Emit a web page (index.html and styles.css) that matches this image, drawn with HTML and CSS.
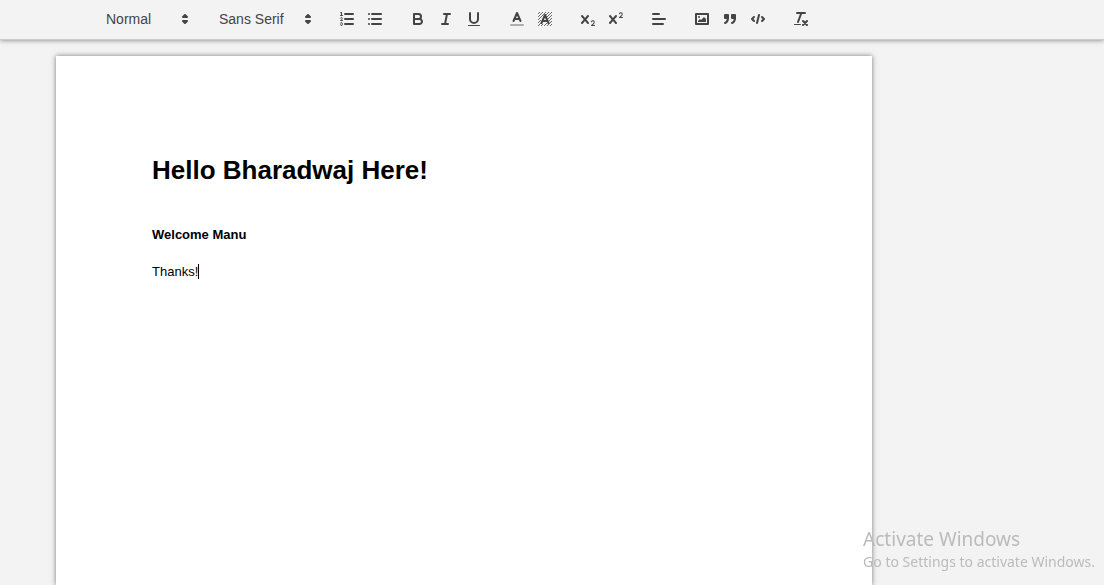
FILE: index.html
```html
<!DOCTYPE html>
<html lang="en">
<head>
<meta charset="utf-8">
<meta name="viewport" content="width=device-width, initial-scale=1">
<title>Document editor</title>
<link rel="stylesheet" href="styles.css">
</head>
<body>
<div class="toolbar" role="toolbar" aria-label="Formatting">
  <div class="picker picker-header">
    <select class="picker-select" aria-label="Heading level">
      <option>Normal</option>
      <option>Heading 1</option>
      <option>Heading 2</option>
    </select>
    <svg class="icon picker-arrows" viewBox="0 0 18 18" aria-hidden="true"><polygon class="stroke" points="7 11 9 13 11 11 7 11"/><polygon class="stroke" points="7 7 9 5 11 7 7 7"/></svg>
  </div>
  <div class="picker picker-font">
    <select class="picker-select" aria-label="Font">
      <option>Sans Serif</option>
      <option>Serif</option>
      <option>Monospace</option>
    </select>
    <svg class="icon picker-arrows" viewBox="0 0 18 18" aria-hidden="true"><polygon class="stroke" points="7 11 9 13 11 11 7 11"/><polygon class="stroke" points="7 7 9 5 11 7 7 7"/></svg>
  </div>
  <div class="group">
    <button class="tool" type="button" aria-label="Numbered list"><svg class="icon" viewBox="0 0 18 18"><path class="stroke" d="M7 4H15M7 9H15M7 14H15"/><path class="stroke thin" d="M2.5 5.5H4.5"/><path class="fill" d="M3.5,6A0.5,0.5,0,0,1,3,5.5V3.085l-0.276.138A0.5,0.5,0,0,1,2.053,3c-0.124-.247-0.023-0.324.224-0.447l1-.5A0.5,0.5,0,0,1,4,2.5v3A0.5,0.5,0,0,1,3.5,6Z"/><path class="stroke thin" d="M4.5,10.5h-2c0-.234,1.85-1.076,1.85-2.234A0.959,0.959,0,0,0,2.5,8.156"/><path class="stroke thin" d="M2.5,14.846a0.959,0.959,0,0,0,1.85-.109A0.7,0.7,0,0,0,3.75,14a0.688,0.688,0,0,0,.6-0.736,0.959,0.959,0,0,0-1.85-.109"/></svg></button>
    <button class="tool" type="button" aria-label="Bulleted list"><svg class="icon" viewBox="0 0 18 18"><path class="stroke" d="M6 4H15M6 9H15M6 14H15M3 4H3M3 9H3M3 14H3"/></svg></button>
  </div>
  <div class="group">
    <button class="tool" type="button" aria-label="Bold"><svg class="icon" viewBox="0 0 18 18"><path class="stroke" d="M5,4H9.5A2.5,2.5,0,0,1,12,6.5v0A2.5,2.5,0,0,1,9.5,9H5V4Z"/><path class="stroke" d="M5,9h5.5A2.5,2.5,0,0,1,13,11.5v0A2.5,2.5,0,0,1,10.5,14H5V9Z"/></svg></button>
    <button class="tool" type="button" aria-label="Italic"><svg class="icon" viewBox="0 0 18 18"><path class="stroke" d="M7 4H13M5 14H11M8 14L10 4"/></svg></button>
    <button class="tool" type="button" aria-label="Underline"><svg class="icon" viewBox="0 0 18 18"><path class="stroke" d="M5,3V9a4.012,4.012,0,0,0,4,4H9a4.012,4.012,0,0,0,4-4V3"/><rect class="fill" height="1" rx="0.5" width="12" x="3" y="15"/></svg></button>
  </div>
  <div class="group">
    <button class="tool" type="button" aria-label="Text color"><svg class="icon" viewBox="0 0 18 18"><path class="stroke swatch" d="M3 15H15"/><path class="stroke" d="M5.5 11L9 3L12.5 11M11.63 9H6.38"/></svg></button>
    <button class="tool" type="button" aria-label="Highlight color"><svg class="icon" viewBox="0 0 18 18"><path class="stroke hatch" d="M2 4L4 2M2 7L7 2M2 10L10 2M2 13L5 10M2 16L5 13M10 5L13 2M11 7L16 2M12 9L16 5M13 11L16 8M5 16L7 14M8 16L11 13M11 16L16 11M14 16L16 14"/><path class="stroke" d="M5.5 13L9 5L12.5 13M11.63 11H6.38"/></svg></button>
  </div>
  <div class="group">
    <button class="tool" type="button" aria-label="Subscript"><svg class="icon" viewBox="0 0 18 18"><path class="fill" d="M15.5,15H13.861a3.858,3.858,0,0,0,1.914-2.975,1.8,1.8,0,0,0-1.6-1.751A1.921,1.921,0,0,0,12.021,11.7a0.5,0.5,0,1,0,.957.291h0a0.914,0.914,0,0,1,1.053-.725,0.81,0.81,0,0,1,.744.762c0,1.076-1.17,1.87-1.94,2.431A1.456,1.456,0,0,0,12,15.5a0.5,0.5,0,0,0,.5.5h3A0.5,0.5,0,0,0,15.5,15Z"/><path class="fill" d="M9.65,5.241a1,1,0,0,0-1.409.108L6,7.964,3.759,5.349A1,1,0,0,0,2.192,6.592Q2.215,6.621,2.241,6.649L4.684,9.5,2.241,12.35A1,1,0,0,0,3.71,13.707q0.026-.028.049-0.057L6,11.036,8.241,13.65a1,1,0,1,0,1.567-1.243Q9.785,12.378,9.759,12.35L7.316,9.5,9.759,6.651A1,1,0,0,0,9.65,5.241Z"/></svg></button>
    <button class="tool" type="button" aria-label="Superscript"><svg class="icon" viewBox="0 0 18 18"><path class="fill" d="M15.5,7H13.861a4.015,4.015,0,0,0,1.914-2.975,1.8,1.8,0,0,0-1.6-1.751A1.922,1.922,0,0,0,12.021,3.7a0.5,0.5,0,1,0,.957.291,0.917,0.917,0,0,1,1.053-.725,0.81,0.81,0,0,1,.744.762c0,1.077-1.164,1.925-1.934,2.486A1.423,1.423,0,0,0,12,7.5a0.5,0.5,0,0,0,.5.5h3A0.5,0.5,0,0,0,15.5,7Z"/><path class="fill" d="M9.65,5.241a1,1,0,0,0-1.409.108L6,7.964,3.759,5.349A1,1,0,0,0,2.192,6.592Q2.215,6.621,2.241,6.649L4.684,9.5,2.241,12.35A1,1,0,0,0,3.71,13.707q0.026-.028.049-0.057L6,11.036,8.241,13.65a1,1,0,1,0,1.567-1.243Q9.785,12.378,9.759,12.35L7.316,9.5,9.759,6.651A1,1,0,0,0,9.65,5.241Z"/></svg></button>
  </div>
  <div class="group">
    <button class="tool" type="button" aria-label="Align"><svg class="icon" viewBox="0 0 18 18"><path class="stroke" d="M3 9H15M3 14H13M3 4H9"/></svg></button>
  </div>
  <div class="group">
    <button class="tool" type="button" aria-label="Insert image"><svg class="icon" viewBox="0 0 18 18"><rect class="stroke" height="10" width="12" x="3" y="4"/><circle class="fill" cx="6" cy="7" r="1"/><polygon class="fill" points="5 12 5 11 7 9 8 10 11 7 13 9 13 12 5 12"/></svg></button>
    <button class="tool" type="button" aria-label="Block quote"><svg class="icon" viewBox="0 0 18 18"><rect class="stroke solid" height="3" width="3" x="4" y="5"/><rect class="stroke solid" height="3" width="3" x="11" y="5"/><path class="stroke solid" d="M7,8c0,4.031-3,5-3,5"/><path class="stroke solid" d="M14,8c0,4.031-3,5-3,5"/></svg></button>
    <button class="tool" type="button" aria-label="Code block"><svg class="icon" viewBox="0 0 18 18"><path class="stroke" d="M5 7L3 9L5 11M13 7L15 9L13 11M10 5L8 13"/></svg></button>
  </div>
  <div class="group">
    <button class="tool" type="button" aria-label="Clear formatting"><svg class="icon" viewBox="0 0 18 18"><path class="stroke" d="M5 3H13M6 12L9.35 3M11 11L15 15M15 11L11 15"/><rect class="fill" height="1" rx="0.5" width="7" x="2" y="14"/></svg></button>
  </div>
</div>
<main class="workspace">
  <article class="page" contenteditable="true" spellcheck="false" aria-label="Document">
    <h1 class="title">Hello Bharadwaj Here!</h1>
    <p class="line"><strong>Welcome Manu</strong></p>
    <p class="line">Thanks!<span class="caret"></span></p>
  </article>
</main>
<aside class="watermark">
  <p class="watermark-title">Activate Windows</p>
  <p class="watermark-text">Go to Settings to activate Windows.</p>
</aside>
</body>
</html>
```

FILE: styles.css
```css
* {
  box-sizing: border-box;
}

body {
  margin: 0;
  min-height: 100vh;
  display: flex;
  flex-direction: column;
  background: #f3f3f3;
  font-family: "Liberation Sans", Arial, sans-serif;
}

.toolbar {
  display: flex;
  flex-wrap: wrap;
  gap: 0 15px;
  padding: 7px 8px 8px 97px;
  border-bottom: 1px solid #ccc;
  background: #f3f3f3;
  box-shadow: 0 0 5px 0 rgba(0, 0, 0, 0.5);
  color: #444;
}

.group {
  display: flex;
}

.tool {
  width: 28px;
  height: 24px;
  padding: 3px 5px;
  border: 0;
  background: none;
  cursor: pointer;
}

.icon {
  display: block;
  width: 18px;
  height: 18px;
}

.stroke {
  fill: none;
  stroke: #444;
  stroke-width: 2;
  stroke-linecap: round;
  stroke-linejoin: round;
}

.fill {
  fill: #444;
}

.solid {
  fill: #444;
}

.thin {
  stroke-width: 1;
}

.hatch {
  stroke-width: 0.8;
  stroke-linecap: butt;
}

.swatch {
  opacity: 0.4;
}

.picker {
  display: grid;
  grid-template-columns: 1fr 18px;
  align-items: center;
  height: 24px;
  padding-right: 1px;
}

.picker-header {
  width: 98px;
}

.picker-font {
  width: 108px;
}

.picker-select {
  grid-area: 1 / 1 / 2 / 3;
  width: 100%;
  height: 24px;
  padding: 0 18px 0 9px;
  border: 0;
  appearance: none;
  background: none;
  color: #444;
  font: 500 14px/24px "Liberation Sans", Arial, sans-serif;
}

.picker-arrows {
  grid-area: 1 / 2 / 2 / 3;
  pointer-events: none;
}

.workspace {
  flex: 1;
  display: flex;
  padding: 16px 56px 0;
}

.page {
  width: 100%;
  max-width: 816px;
  padding: 96px;
  background: #fff;
  box-shadow: 0 0 5px 0 rgba(0, 0, 0, 0.5);
  color: #000;
  outline: 0;
}

.title {
  margin: 0 0 37px;
  font-size: 26px;
  line-height: 37px;
}

.line {
  margin: 0 0 19px;
  font-size: 13px;
  line-height: 18px;
}

.caret {
  display: inline-block;
  width: 1px;
  height: 15px;
  background: #000;
  vertical-align: text-bottom;
}

.watermark {
  position: fixed;
  right: 9px;
  bottom: 13px;
  color: #bbb;
  font-family: "Noto Sans", sans-serif;
  pointer-events: none;
}

.watermark-title {
  margin: 0;
  font-size: 19px;
  line-height: 26px;
}

.watermark-text {
  margin: 0;
  font-size: 14px;
  line-height: 20px;
}
```
